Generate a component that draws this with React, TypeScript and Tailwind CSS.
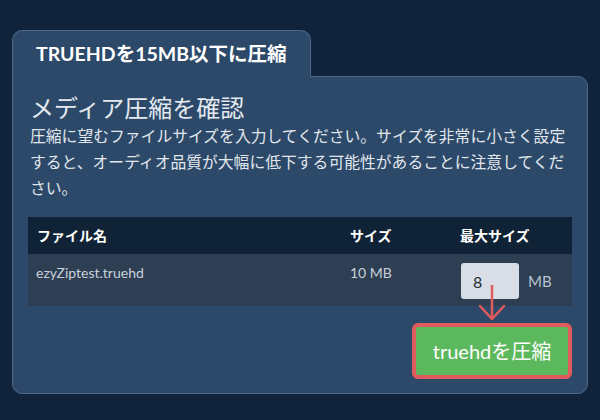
import React from 'react';

const font = "font-['Lato','Noto_Sans_CJK_JP',sans-serif]";

const App: React.FC = () => {
  return (
    <div className={`w-[600px] h-[420px] bg-[#10233a] pt-[30px] px-[12px] ${font}`}>
      <div className="w-[576px]">
        {/* tab */}
        <div className="relative z-10 -mb-px inline-flex h-[47px] items-center rounded-t-[10px] border border-b-0 border-[#4d6889] bg-[#2c4969] px-[23px] text-[19.5px] font-bold text-white">
          TRUEHDを15MB以下に圧縮
        </div>

        {/* card body */}
        <div className="relative rounded-b-[10px] rounded-tr-[10px] border border-[#4d6889] bg-[#2c4969] px-[15px] pt-[17px] pb-[14px]">
          <h2 className="pl-[2px] text-[24px] leading-[28px] text-[#e4e9ef]">メディア圧縮を確認</h2>
          <p className="mt-[1px] pl-[2px] text-[15.8px] leading-[26px] text-[#e2e7ed]">
            圧縮に望むファイルサイズを入力してください。サイズを非常に小さく設定すると、オーディオ品質が大幅に低下する可能性があることに注意してください。
          </p>

          <div className="mt-[16px] w-[544px]">
            <div className="grid h-[37px] grid-cols-[313px_110px_1fr] items-center bg-[#0f2236] text-[14px] font-bold text-white">
              <div className="pl-[9px]">ファイル名</div>
              <div className="pl-[9px]">サイズ</div>
              <div className="pl-[9px]">最大サイズ</div>
            </div>
            <div className="grid grid-cols-[313px_110px_1fr] bg-[#2e3e53] pt-[9px] pb-[7px] text-[14px] text-[#c9d1dc]">
              <div className="pl-[8px] leading-[20px]">ezyZiptest.truehd</div>
              <div className="pl-[9px] leading-[20px]">10 MB</div>
              <div className="flex items-center gap-[9px] pl-[10px]">
                <div className="relative">
                  <input
                    defaultValue="8"
                    className="h-[36px] w-[58px] rounded-[3px] bg-[#d8dde6] pl-[12px] text-[16px] text-[#1f2d3d] outline-none"
                  />
                  <svg
                    className="pointer-events-none absolute left-[18px] top-[22px]"
                    width="28"
                    height="36"
                    viewBox="0 0 28 36"
                    fill="none"
                    stroke="#e05c5c"
                    strokeWidth="2.5"
                    strokeLinecap="round"
                    strokeLinejoin="round"
                  >
                    <path d="M13 0 L13 34" />
                    <path d="M1 21 L13 34 L25 21" />
                  </svg>
                </div>
                <span className="text-[15px] text-[#b9c3d0]">MB</span>
              </div>
            </div>
          </div>

          <div className="mt-[17px] flex w-[544px] justify-end">
            <button className="h-[56px] w-[160px] rounded-[6px] border-4 border-[#e05c5c] bg-[#5cb85c] text-[20px] text-white">
              truehdを圧縮
            </button>
          </div>
        </div>
      </div>
    </div>
  );
};

export default App;
